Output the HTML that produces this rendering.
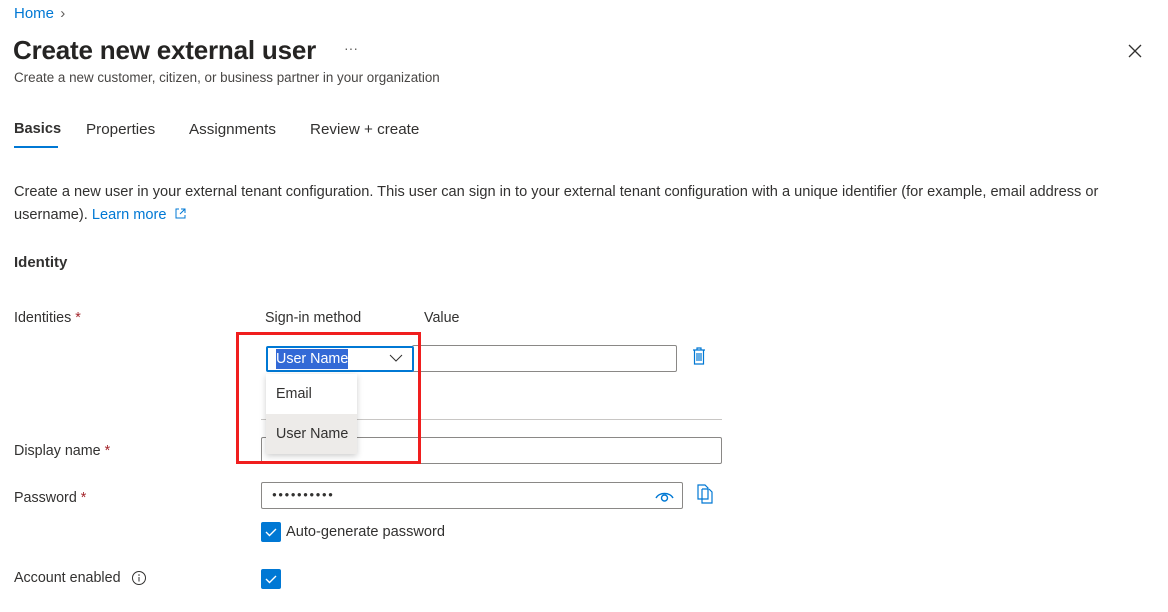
<!DOCTYPE html>
<html><head><style>
*{margin:0;padding:0;box-sizing:border-box}
body{width:1168px;height:612px;background:#fff;font-family:"Liberation Sans",sans-serif;color:#323130;position:relative;overflow:hidden;font-size:14.3px}
.a{position:absolute;white-space:nowrap}
.req{color:#a4262c}
.inp{position:absolute;border:1px solid #8a8886;border-radius:2px;background:#fff}
.cb{position:absolute;width:20px;height:20px;background:#0078d4;border-radius:2px}
</style></head><body>
<div class="a" style="left:14px;top:5px;color:#0078d4;font-size:15px">Home <span style="color:#605e5c;margin-left:2px">&#x203A;</span></div>
<div class="a" style="left:13px;top:35px;font-size:26px;font-weight:bold;color:#252423;letter-spacing:-0.2px">Create new external user</div>
<div class="a" style="left:344px;top:40px;font-size:14px;color:#605e5c">···</div>
<svg class="a" style="left:1128px;top:44px" width="14" height="14" viewBox="0 0 14 14"><path d="M1 1L13 13M13 1L1 13" stroke="#323130" stroke-width="1.3"/></svg>
<div class="a" style="left:14px;top:70px;font-size:13.4px;color:#484644">Create a new customer, citizen, or business partner in your organization</div>
<div class="a" style="left:14px;top:121px;font-size:14.6px;font-weight:bold;color:#323130">Basics</div>
<div class="a" style="left:14px;top:146px;width:44px;height:2px;background:#0078d4"></div>
<div class="a" style="left:86px;top:121px;font-size:15.2px">Properties</div>
<div class="a" style="left:189px;top:121px;font-size:15.2px">Assignments</div>
<div class="a" style="left:310px;top:121px;font-size:15.2px">Review + create</div>
<div class="a" style="left:14px;top:184px;font-size:14.6px">Create a new user in your external tenant configuration. This user can sign in to your external tenant configuration with a unique identifier (for example, email address or</div>
<div class="a" style="left:14px;top:207px;font-size:14.6px">username). <span style="color:#0078d4">Learn more</span> <svg width="11" height="11" viewBox="0 0 11 11" style="margin-left:4px"><path d="M4 1H1V10H10V7M6 1H10V5M10 1L5 6" stroke="#0078d4" fill="none" stroke-width="1"/></svg></div>
<div class="a" style="left:14px;top:254px;font-weight:bold;font-size:15px">Identity</div>
<div class="a" style="left:14px;top:310px">Identities <span class="req">*</span></div>
<div class="a" style="left:265px;top:310px">Sign-in method</div>
<div class="a" style="left:424px;top:310px">Value</div>
<div class="inp" style="left:412px;top:345px;width:265px;height:27px"></div>
<div class="a" style="left:266px;top:346px;width:148px;height:26px;border:2px solid #0078d4;border-radius:2px;background:#fff"></div>
<div class="a" style="left:276px;top:349px;height:20px;width:72px;background:#3369d6;color:#fff;font-size:14.3px;line-height:20px;overflow:hidden">User Name</div>
<svg class="a" style="left:389px;top:354px" width="14" height="9" viewBox="0 0 14 9"><path d="M1 1L7 7L13 1" stroke="#323130" fill="none" stroke-width="1"/></svg>
<svg class="a" style="left:692px;top:347px" width="14" height="18" viewBox="0 0 14 18"><path d="M1 3H13M5 3V1H9V3M2.5 3V17H11.5V3M5 6V14M7 6V14M9 6V14" stroke="#0078d4" fill="none" stroke-width="1.2"/></svg>
<div class="a" style="left:261px;top:419px;width:461px;height:1px;background:#c8c6c4"></div>
<div class="a" style="left:14px;top:443px">Display name <span class="req">*</span></div>
<div class="inp" style="left:261px;top:437px;width:461px;height:27px"></div>
<div class="a" style="left:266px;top:374px;width:91px;height:80px;background:#fff;box-shadow:0 2px 6px rgba(0,0,0,.2)">
 <div style="height:40px;line-height:40px;padding-left:10px;font-size:14.3px">Email</div>
 <div style="height:40px;line-height:41px;padding-left:10px;font-size:14.3px;background:#edebe9">User Name</div>
</div>
<div class="a" style="left:236px;top:332px;width:185px;height:132px;border:3px solid #f01e1e"></div>
<div class="a" style="left:14px;top:490px">Password <span class="req">*</span></div>
<div class="inp" style="left:261px;top:482px;width:422px;height:27px"></div>
<div class="a" style="left:272px;top:490px;font-size:8px;letter-spacing:1.4px;color:#323130">●●●●●●●●●●</div>
<svg class="a" style="left:655px;top:491px" width="19" height="12" viewBox="0 0 19 12"><path d="M1 7C4 1 15 1 18 7" stroke="#0078d4" fill="none" stroke-width="1.4"/><circle cx="9.5" cy="7" r="3" stroke="#0078d4" fill="none" stroke-width="1.4"/></svg>
<svg class="a" style="left:697px;top:484px" width="16" height="20" viewBox="0 0 16 20"><path d="M1 1H8L11 4V15H1Z M5 5H11 M5 5V19H15V8L12 5" stroke="#0078d4" fill="none" stroke-width="1.2"/></svg>
<div class="cb" style="left:261px;top:522px"><svg width="20" height="20"><path d="M5 10L8.5 13.5L15 7" stroke="#fff" fill="none" stroke-width="1.4"/></svg></div>
<div class="a" style="left:286px;top:524px;font-size:14.6px">Auto-generate password</div>
<div class="a" style="left:14px;top:570px">Account enabled</div>
<svg class="a" style="left:131px;top:570px" width="16" height="16" viewBox="0 0 16 16"><circle cx="8" cy="8" r="6.5" stroke="#323130" fill="none"/><path d="M8 7V11.5" stroke="#323130"/><circle cx="8" cy="5" r=".8" fill="#323130"/></svg>
<div class="cb" style="left:261px;top:569px"><svg width="20" height="20"><path d="M5 10L8.5 13.5L15 7" stroke="#fff" fill="none" stroke-width="1.4"/></svg></div>
</body></html>
